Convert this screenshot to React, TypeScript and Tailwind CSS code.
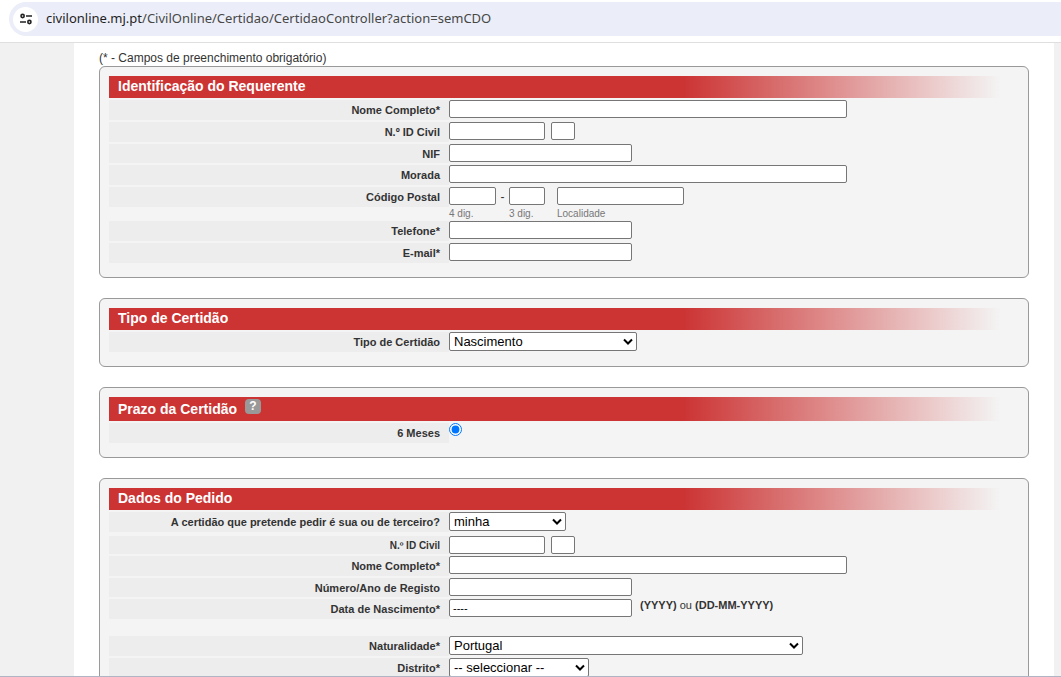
import type { ReactNode } from 'react';

const inputStyle = 'block h-[18px] rounded-[2px] border border-[#767676] bg-white px-[3px] text-[11px] leading-4 text-black';

function Header({ children }: { children: ReactNode }) {
  return (
    <legend className="float-left mb-0.5 flex min-h-[22px] w-full bg-linear-to-r/srgb from-[#cc3333] from-63% to-[#f4f4f4] to-98% pl-[9px] text-[14px] leading-5 font-bold text-white">
      {children}
    </legend>
  );
}

function Section({ title, children }: { title: ReactNode; children: ReactNode }) {
  return (
    <fieldset className="mb-5 rounded-md border border-[#999] bg-[#f4f4f4] px-[9px] pt-[9px] pb-[14px]">
      <Header>{title}</Header>
      <div className="clear-both flex flex-col gap-0.5">{children}</div>
    </fieldset>
  );
}

function Row({ id, label, height = 'h-5', size = 'text-[11px]', children }: { id: string; label: string; height?: string; size?: string; children: ReactNode }) {
  return (
    <div className="flex items-start">
      <label htmlFor={id} className={`${height} ${size} w-[340px] shrink-0 bg-[#ededed] pr-[9px] text-right leading-5 font-bold text-[#333]`}>
        {label}
      </label>
      {children}
    </div>
  );
}

function Select({ id, width, options }: { id: string; width: string; options: string[] }) {
  return (
    <div className={`relative ${width}`}>
      <select id={id} className="block h-[19px] w-full appearance-none rounded-[2px] border border-[#767676] bg-white pr-4 pl-1 text-[13px] leading-4 text-black">
        {options.map((o) => (
          <option key={o}>{o}</option>
        ))}
      </select>
      <svg className="pointer-events-none absolute top-1.5 right-1" width="10" height="8" viewBox="0 0 10 8" fill="none">
        <path d="M1 1.5 L5 5.5 L9 1.5" stroke="#000" strokeWidth="2" />
      </svg>
    </div>
  );
}

export default function App() {
  return (
    <div className="flex h-screen flex-col border-b border-[#b0b5c6] bg-white font-['Liberation_Sans',Arial,sans-serif]">
      <header className="shrink-0 border-b border-[#dfdfdf] pt-0.5 pb-1.5 pl-[9px]">
        <div className="flex h-[34px] items-center gap-2 rounded-l-full bg-[#ebeef8] pl-1">
          <button type="button" aria-label="Site" className="flex size-[25px] items-center justify-center rounded-full bg-white">
            <svg width="12" height="12" viewBox="0 0 12 12" fill="none" stroke="#222" strokeWidth="1.6">
              <circle cx="2.6" cy="3" r="1.6" />
              <path d="M6 3h6M0 9h6" />
              <circle cx="9.4" cy="9" r="1.6" />
            </svg>
          </button>
          <p className="font-['Noto_Sans',sans-serif] text-[13px] text-[#474747]">
            <span className="text-[#1f1f1f]">civilonline.mj.pt</span>/CivilOnline/Certidao/CertidaoController?action=semCDO
          </p>
        </div>
      </header>

      <main className="min-h-0 flex-1 overflow-y-auto bg-[#f1f1f1] pr-[7px] pl-[74px] [scrollbar-width:none]">
        <form className="bg-white px-[25px] pt-2">
          <p className="text-[12px] leading-[15px] text-[#333]">(* - Campos de preenchimento obrigatório)</p>

          <Section title="Identificação do Requerente">
            <Row id="nome" label="Nome Completo*">
              <input id="nome" className={`${inputStyle} w-[398px]`} />
            </Row>
            <Row id="civil" label="N.º ID Civil">
              <input id="civil" className={`${inputStyle} w-24`} />
              <input aria-label="Dígito de controlo" className={`${inputStyle} ml-1.5 w-6`} />
            </Row>
            <Row id="nif" label="NIF" height="h-[19px]">
              <input id="nif" className={`${inputStyle} w-[183px]`} />
            </Row>
            <Row id="morada" label="Morada">
              <input id="morada" className={`${inputStyle} w-[398px]`} />
            </Row>
            <div>
              <Row id="postal" label="Código Postal">
                <input id="postal" className={`${inputStyle} w-[47px]`} />
                <span className="w-[13px] text-center text-[12px] leading-5 text-[#333]">-</span>
                <input aria-label="3 dig." className={`${inputStyle} w-9`} />
                <input aria-label="Localidade" className={`${inputStyle} ml-3 w-[127px]`} />
              </Row>
              <div className="-mb-0.5 flex h-[14px] pl-[340px] text-[10px] leading-[14px] text-[#777]">
                <span className="w-[60px]">4 dig.</span>
                <span className="w-12">3 dig.</span>
                <span>Localidade</span>
              </div>
            </div>
            <Row id="telefone" label="Telefone*">
              <input id="telefone" className={`${inputStyle} w-[183px]`} />
            </Row>
            <Row id="email" label="E-mail*">
              <input id="email" className={`${inputStyle} w-[183px]`} />
            </Row>
          </Section>

          <Section title="Tipo de Certidão">
            <Row id="tipo" label="Tipo de Certidão">
              <Select id="tipo" width="w-[188px]" options={['Nascimento', 'Casamento', 'Óbito']} />
            </Row>
          </Section>

          <Section
            title={
              <span className="flex h-6 items-start gap-2 leading-6">
                Prazo da Certidão
                <button type="button" className="mt-0.5 h-[15px] w-4 rounded bg-[#999] text-[12px] leading-[15px]">?</button>
              </span>
            }
          >
            <Row id="prazo" label="6 Meses">
              <input id="prazo" type="radio" defaultChecked className="size-[13px] accent-[#0075ff]" />
            </Row>
          </Section>

          <Section title="Dados do Pedido">
            <Row id="titular" label="A certidão que pretende pedir é sua ou de terceiro?">
              <Select id="titular" width="w-[117px]" options={['minha', 'terceiro']} />
            </Row>
            <div className="pt-0.5">
              <Row id="civil2" label="N.º ID Civil" height="h-[18px]" size="text-[10px]">
                <input id="civil2" className={`${inputStyle} w-24`} />
                <input aria-label="Dígito de controlo" className={`${inputStyle} ml-1.5 w-6`} />
              </Row>
            </div>
            <Row id="nome2" label="Nome Completo*">
              <input id="nome2" className={`${inputStyle} w-[398px]`} />
            </Row>
            <Row id="registo" label="Número/Ano de Registo" height="h-[19px]">
              <input id="registo" className={`${inputStyle} w-[183px]`} />
            </Row>
            <Row id="data" label="Data de Nascimento*">
              <input id="data" defaultValue="----" className={`${inputStyle} w-[183px]`} />
              <span className="ml-2 text-[11px] leading-[13px] font-bold text-[#333]">
                (YYYY) <span className="font-normal">ou</span> (DD-MM-YYYY)
              </span>
            </Row>
            <div className="pt-[15px]">
              <Row id="naturalidade" label="Naturalidade*">
                <Select id="naturalidade" width="w-[354px]" options={['Portugal', 'Estrangeiro']} />
              </Row>
            </div>
            <Row id="distrito" label="Distrito*">
              <Select id="distrito" width="w-[140px]" options={['-- seleccionar --', 'Lisboa', 'Porto']} />
            </Row>
          </Section>
        </form>
      </main>
    </div>
  );
}
